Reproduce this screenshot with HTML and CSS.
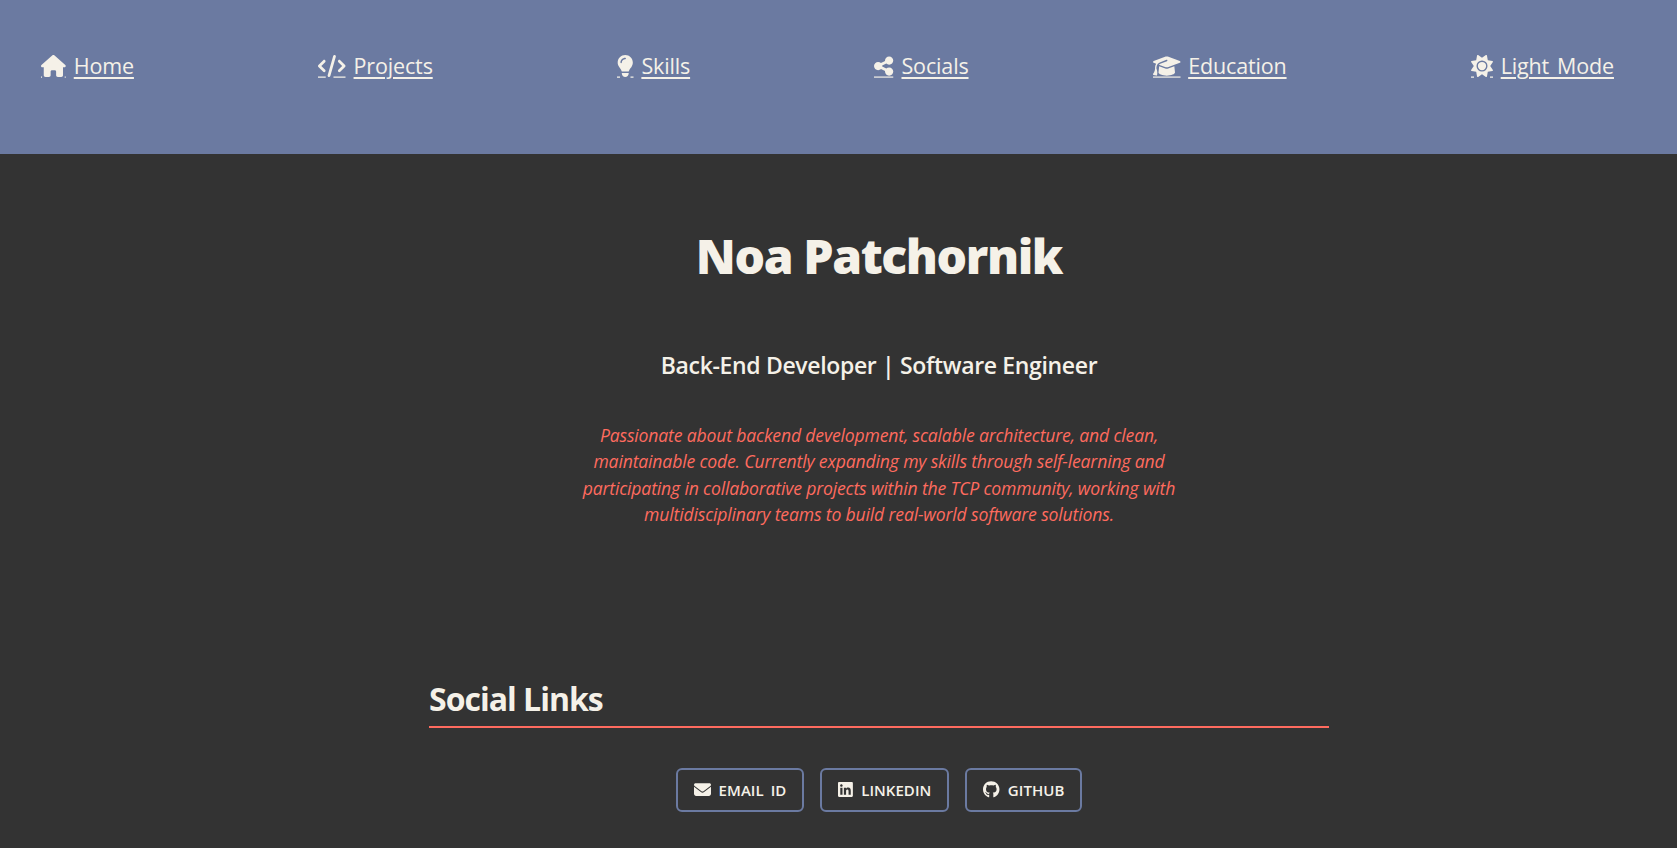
FILE: index.html
```html
<!DOCTYPE html>
<html lang="en">
<head>
    <meta charset="UTF-8">
    <meta name="viewport" content="width=device-width, initial-scale=1.0">
    <title>Noa Patchornik</title>
    <link rel="stylesheet" href="styles.css">
</head>
<body>
    <nav class="navbar">
        <a href="#home">
            <svg class="nav-icon" viewBox="0 0 576 512"><path d="M575.8 255.5c0 18-15 32.1-32 32.1h-32l.7 160.2c0 2.7-.2 5.4-.5 8.1V472c0 22.1-17.9 40-40 40H456c-1.1 0-2.2 0-3.3-.1c-1.4 .1-2.8 .1-4.2 .1H416 392c-22.1 0-40-17.9-40-40V448 384c0-17.7-14.3-32-32-32H256c-17.7 0-32 14.3-32 32v64 24c0 22.1-17.9 40-40 40H160 128.1c-1.5 0-3-.1-4.5-.2c-1.2 .1-2.4 .2-3.6 .2H104c-22.1 0-40-17.9-40-40V360c0-.9 0-1.9 .1-2.8V287.6H32c-18 0-32-14-32-32.1c0-9 3-17 10-24L266.4 8c7-7 15-8 22-8s15 2 21 7L564.8 231.5c8 7 12 15 11 24z"/><path d="M0 500h24v28H0zM552 500h24v28h-24z"/></svg>
            <span>Home</span>
        </a>
        <a href="#projects">
            <svg class="nav-icon" viewBox="0 0 640 512"><path d="M392.8 1.2c-17-4.9-34.7 5-39.6 22l-128 448c-4.9 17 5 34.7 22 39.6s34.7-5 39.6-22l128-448c4.9-17-5-34.7-22-39.6zm80.6 120.1c-12.5 12.5-12.5 32.8 0 45.3L562.7 256l-89.4 89.4c-12.5 12.5-12.5 32.8 0 45.3s32.8 12.5 45.3 0l112-112c12.5-12.5 12.5-32.8 0-45.3l-112-112c-12.5-12.5-32.8-12.5-45.3 0zm-306.7 0c-12.5-12.5-32.8-12.5-45.3 0l-112 112c-12.5 12.5-12.5 32.8 0 45.3l112 112c12.5 12.5 32.8 12.5 45.3 0s12.5-32.8 0-45.3L77.3 256l89.4-89.4c12.5-12.5 12.5-32.8 0-45.3z"/><path d="M0 500h180v28H0zM360 500h280v28H360z"/></svg>
            <span>Projects</span>
        </a>
        <a href="#skills">
            <svg class="nav-icon" viewBox="0 0 384 512"><path d="M272 384c9.6-31.9 29.5-59.1 49.2-86.2l0 0c5.2-7.1 10.4-14.2 15.4-21.4c19.8-28.5 31.4-63 31.4-100.3C368 78.8 289.2 0 192 0S16 78.8 16 176c0 37.3 11.6 71.9 31.4 100.3c5 7.2 10.2 14.3 15.4 21.4l0 0c19.8 27.1 39.7 54.4 49.2 86.2H272zM192 512c44.2 0 80-35.8 80-80V416H112v16c0 44.2 35.8 80 80 80zM112 176c0 8.8-7.2 16-16 16s-16-7.2-16-16c0-61.9 50.1-112 112-112c8.8 0 16 7.2 16 16s-7.2 16-16 16c-44.2 0-80 35.8-80 80z"/><path d="M0 500h70v28H0zM314 500h70v28h-70z"/></svg>
            <span>Skills</span>
        </a>
        <a href="#socials">
            <svg class="nav-icon" viewBox="0 0 448 512"><path d="M352 224c53 0 96-43 96-96s-43-96-96-96s-96 43-96 96c0 4 .2 8 .7 11.9l-94.1 47C145.4 170.2 121.9 160 96 160c-53 0-96 43-96 96s43 96 96 96c25.9 0 49.4-10.2 66.6-26.9l94.1 47c-.5 3.9-.7 7.8-.7 11.9c0 53 43 96 96 96s96-43 96-96s-43-96-96-96c-25.9 0-49.4 10.2-66.6 26.9l-94.1-47c.5-3.9 .7-7.8 .7-11.9s-.2-8-.7-11.9l94.1-47C302.6 213.8 326.1 224 352 224z"/><path d="M0 500h448v28H0z"/></svg>
            <span>Socials</span>
        </a>
        <a href="#education">
            <svg class="nav-icon" viewBox="0 0 640 512"><path d="M320 32c-8.100 0-16.100 1.400-23.700 4.100L15.800 137.400C6.300 140.900 0 149.900 0 160s6.300 19.100 15.800 22.600l57.900 20.900C57.300 229.300 48 259.800 48 291.900v28.100c0 28.400-10.800 57.700-22.300 80.800c-6.500 13-13.900 25.800-22.500 37.600C0 442.700-.9 448.300 .9 453.400s6 8.900 11.200 10.200l64 16c4.200 1.100 8.700 .3 12.400-2s6.300-6.100 7.100-10.400c8.600-42.800 4.300-81.200-2.100-108.700C90.300 344.300 86 329.800 80 316.500V291.900c0-30.200 10.200-58.700 27.900-81.500c12.900-15.500 29.600-28 49.200-35.700l157-61.700c8.200-3.200 17.500 .8 20.700 9s-.8 17.500-9 20.700l-157 61.700c-12.400 4.900-23.300 12.400-32.200 21.600l159.600 57.600c7.600 2.700 15.600 4.100 23.700 4.100s16.100-1.400 23.700-4.100L624.200 182.600c9.500-3.400 15.800-12.500 15.800-22.600s-6.300-19.100-15.800-22.600L343.700 36.100C336.100 33.400 328.100 32 320 32zM128 408c0 35.300 86 72 192 72s192-36.700 192-72L496.700 262.600 354.500 314c-11.100 4-22.800 6-34.500 6s-23.500-2-34.500-6L143.300 262.600 128 408z"/><path d="M0 500h640v28H0z"/></svg>
            <span>Education</span>
        </a>
        <a href="#theme">
            <svg class="nav-icon" viewBox="0 0 512 512"><path d="M361.500 1.200c5 2.100 8.600 6.600 9.600 11.900L391 121l107.900 19.800c5.300 1 9.800 4.600 11.900 9.600s1.500 10.700-1.600 15.200L446.900 256l62.300 90.300c3.100 4.500 3.700 10.200 1.600 15.200s-6.600 8.600-11.900 9.600L391 391 371.100 498.900c-1 5.300-4.600 9.800-9.600 11.900s-10.700 1.500-15.200-1.600L256 446.900l-90.300 62.300c-4.500 3.100-10.200 3.700-15.200 1.600s-8.600-6.600-9.600-11.900L121 391 13.100 371.100c-5.300-1-9.800-4.600-11.900-9.600s-1.500-10.700 1.600-15.200L65.100 256 2.800 165.700c-3.100-4.500-3.700-10.200-1.600-15.200s6.600-8.600 11.900-9.600L121 121 140.900 13.100c1-5.300 4.600-9.800 9.600-11.900s10.700-1.500 15.200 1.600L256 65.100 346.300 2.800c4.500-3.100 10.200-3.700 15.200-1.600zM160 256a96 96 0 1 1 192 0 96 96 0 1 1 -192 0zm224 0a128 128 0 1 0 -256 0 128 128 0 1 0 256 0z"/><path d="M0 500h70v28H0zM442 500h70v28h-70z"/></svg>
            <span>Light Mode</span>
        </a>
    </nav>

    <main class="content">
        <section class="hero">
            <h1>Noa Patchornik</h1>
            <h2 class="role">Back-End Developer | Software Engineer</h2>
            <p class="tagline">Passionate about backend development, scalable architecture, and clean, maintainable code. Currently expanding my skills through self-learning and participating in collaborative projects within the TCP community, working with multidisciplinary teams to build real-world software solutions.</p>
        </section>

        <section class="socials">
            <h2 class="section-title">Social Links</h2>
            <div class="social-links">
                <a class="btn" href="#email">
                    <svg class="btn-icon" viewBox="0 0 512 512"><path d="M48 64C21.500 64 0 85.500 0 112c0 15.100 7.100 29.300 19.200 38.400L236.800 313.600c11.400 8.500 27 8.500 38.400 0L492.800 150.400c12.100-9.100 19.200-23.300 19.200-38.400c0-26.500-21.500-48-48-48H48zM0 176V384c0 35.300 28.700 64 64 64H448c35.300 0 64-28.700 64-64V176L294.400 339.200c-22.800 17.100-54 17.100-76.800 0L0 176z"/></svg>
                    Email ID
                </a>
                <a class="btn" href="#linkedin">
                    <svg class="btn-icon" viewBox="0 0 448 512"><path d="M416 32H31.900C14.300 32 0 46.500 0 64.300v383.400C0 465.500 14.300 480 31.900 480H416c17.600 0 32-14.500 32-32.300V64.300c0-17.800-14.400-32.300-32-32.300zM135.400 416H69V202.200h66.500V416zm-33.200-243c-21.300 0-38.500-17.300-38.500-38.500S80.900 96 102.200 96c21.200 0 38.500 17.300 38.500 38.500 0 21.300-17.200 38.500-38.500 38.500zm282.100 243h-66.400V312c0-24.800-.5-56.700-34.500-56.700-34.600 0-39.900 27-39.900 54.900V416h-66.400V202.200h63.700v29.200h.9c8.900-16.800 30.600-34.500 62.900-34.500 67.200 0 79.700 44.300 79.700 101.900V416z"/></svg>
                    LinkedIn
                </a>
                <a class="btn" href="#github">
                    <svg class="btn-icon" viewBox="0 0 496 512"><path d="M165.900 397.400c0 2-2.300 3.600-5.200 3.600-3.300 .3-5.600-1.300-5.600-3.600 0-2 2.300-3.600 5.200-3.600 3-.3 5.600 1.300 5.600 3.600zm-31.100-4.500c-.7 2 1.300 4.300 4.300 4.900 2.600 1 5.600 0 6.200-2s-1.300-4.300-4.300-5.200c-2.600-.7-5.500 .3-6.200 2.300zm44.200-1.700c-2.900 .7-4.900 2.600-4.600 4.900 .3 2 2.900 3.300 5.900 2.600 2.900-.7 4.900-2.600 4.600-4.600-.3-1.900-3-3.200-5.900-2.900zM244.800 8C106.100 8 0 113.300 0 252c0 110.900 69.800 205.800 169.500 239.200 12.800 2.300 17.300-5.600 17.300-12.100 0-6.200-.3-40.400-.3-61.400 0 0-70 15-84.700-29.800 0 0-11.400-29.100-27.800-36.600 0 0-22.900-15.700 1.600-15.400 0 0 24.900 2 38.600 25.800 21.900 38.600 58.600 27.500 72.900 20.900 2.300-16 8.800-27.100 16-33.700-55.900-6.200-112.300-14.300-112.300-110.500 0-27.500 7.600-41.300 23.600-58.900-2.600-6.500-11.100-33.300 2.600-67.900 20.900-6.500 69 27 69 27 20-5.600 41.500-8.500 62.800-8.500s42.800 2.900 62.800 8.500c0 0 48.100-33.600 69-27 13.700 34.700 5.200 61.400 2.600 67.900 16 17.700 25.800 31.500 25.800 58.900 0 96.500-58.900 104.200-114.800 110.500 9.200 7.900 17 22.900 17 46.400 0 33.700-.3 75.400-.3 83.600 0 6.500 4.600 14.400 17.300 12.100C428.200 457.800 496 362.900 496 252 496 113.300 383.500 8 244.800 8z"/></svg>
                    GitHub
                </a>
            </div>
        </section>
    </main>
</body>
</html>
```

FILE: styles.css
```css
html, body {
    height: 100%;
}
body {
    font-family: "Open Sans", "Noto Sans", sans-serif;
    margin: 0;
    background-color: #333;
    color: #f5f1e8;
    overflow: hidden;
}
.navbar {
    background-color: #6b7aa1;
    display: flex;
    justify-content: space-between;
    align-items: flex-start;
    height: 154px;
    box-sizing: border-box;
    padding: 50px 63px 0 41px;
}
.navbar a {
    display: flex;
    align-items: flex-start;
    gap: 8px;
    color: #f5f1e8;
    font-size: 21.5px;
    letter-spacing: -0.15px;
    word-spacing: 2.5px;
    line-height: 32px;
    text-decoration: none;
}
.navbar a span {
    text-decoration: underline;
    text-decoration-thickness: 2px;
    text-underline-offset: 3px;
}
.nav-icon {
    height: 22px;
    margin-top: 5px;
    fill: currentColor;
    overflow: visible;
}
.content {
    width: 900px;
    margin-left: 429px;
}
.hero {
    text-align: center;
}
.hero h1 {
    font-size: 48px;
    font-weight: 800;
    letter-spacing: -1.4px;
    line-height: 64px;
    margin: 70px 0 0;
}
.role {
    font-size: 23px;
    font-weight: 600;
    letter-spacing: -0.34px;
    line-height: 32px;
    margin: 61px 0 0;
}
.tagline {
    width: 600px;
    margin: 41px auto 0;
    color: #ff6b5f;
    font-size: 17.6px;
    font-style: italic;
    letter-spacing: -0.16px;
    line-height: 26.4px;
}
.socials {
    margin-top: 149px;
}
.section-title {
    font-size: 32px;
    font-weight: 700;
    letter-spacing: -1px;
    line-height: 43px;
    margin: 0;
    padding-bottom: 6px;
    border-bottom: 2px solid #ff6b5f;
}
.social-links {
    display: flex;
    justify-content: center;
    gap: 16px;
    margin-top: 40px;
}
.btn {
    display: flex;
    align-items: center;
    gap: 8px;
    height: 44px;
    box-sizing: border-box;
    padding: 0 16px;
    border: 2px solid #6b7aa1;
    border-radius: 6px;
    color: #f5f1e8;
    font-size: 15px;
    font-weight: 600;
    letter-spacing: 0.05px;
    word-spacing: 3px;
    text-decoration: none;
    text-transform: uppercase;
}
.btn-icon {
    height: 17px;
    fill: currentColor;
}
```
